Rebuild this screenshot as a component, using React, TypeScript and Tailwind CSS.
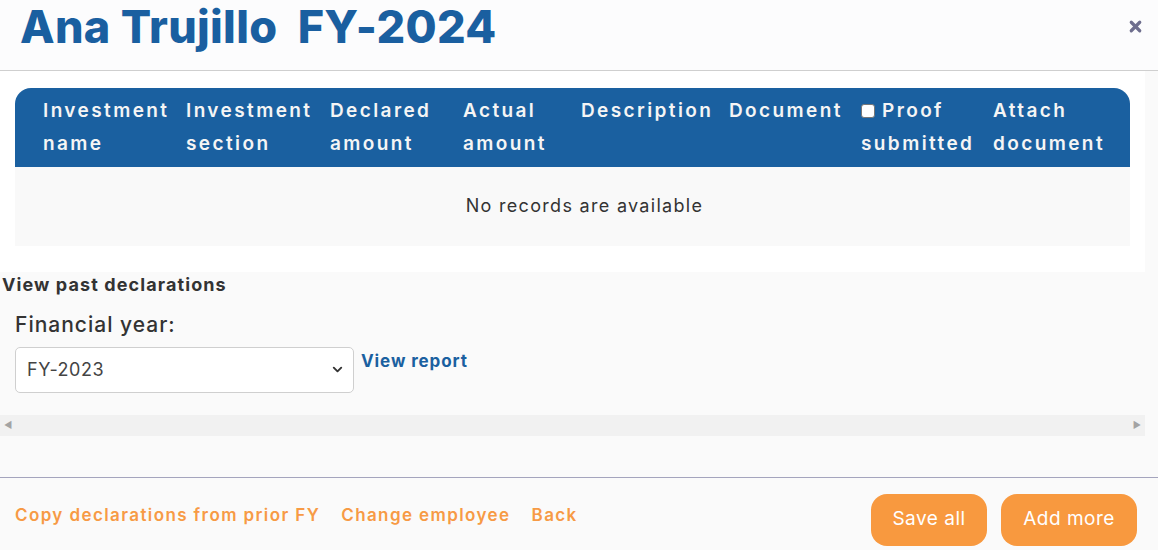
import { X, ChevronDown } from "lucide-react"

const columns = [
  { label: ["Investment", "name"], w: "w-[143px]" },
  { label: ["Investment", "section"], w: "w-[144px]" },
  { label: ["Declared", "amount"], w: "w-[133px]" },
  { label: ["Actual", "amount"], w: "w-[118px]" },
  { label: ["Description"], w: "w-[148px]" },
  { label: ["Document"], w: "w-[132px]" },
]

const App = () => {
  return (
    <div className="h-[550px] w-[1158px] overflow-hidden bg-[#fafafa] font-['Inter',sans-serif] text-[#333]">
      <div className="flex h-[71px] items-start justify-between border-b border-[#cfcfcf] bg-[#fcfcfd] pl-[20px] pr-[14px] pt-[4px]">
        <h1 className="text-[45px] font-extrabold leading-[46px] tracking-[0.3px] text-[#1a5fa0]">
          Ana Trujillo&nbsp; FY-2024
        </h1>
        <X className="mt-[14px] h-[17px] w-[17px] text-[#6e6e8e]" strokeWidth={4.5} />
      </div>

      <div className="w-[1145px] bg-white px-[15px] pb-[26px] pt-[17px]">
        <div className="flex h-[79px] rounded-t-[16px] bg-[#1a60a0] pl-[28px] pt-[6px] text-[19px] font-semibold leading-[33px] tracking-[2.4px] text-[#f5f5f5]">
          {columns.map((c) => (
            <div key={c.label[0]} className={c.w}>
              {c.label.map((l) => (
                <div key={l} className="whitespace-nowrap">{l}</div>
              ))}
            </div>
          ))}
          <div className="w-[132px]">
            <div className="flex items-center gap-[7px]">
              <span className="h-[14px] w-[14px] rounded-[3px] border border-[#777] bg-white" />
              Proof
            </div>
            <div>submitted</div>
          </div>
          <div>
            <div>Attach</div>
            <div>document</div>
          </div>
        </div>
        <div className="flex h-[79px] items-center justify-center bg-[#f9f9f9] pb-[3px] pl-[24px] text-[18px] tracking-[1.3px] text-[#333]">
          No records are available
        </div>
      </div>

      <div className="-mt-[1px]">
        <div className="pl-[2px] text-[18px] font-bold tracking-[1.1px] text-[#333]">View past declarations</div>
        <div className="pl-[15px] pt-[11px] text-[21px] font-medium tracking-[1px] text-[#333]">Financial year:</div>
        <div className="mt-[6px] flex items-start pl-[15px]">
          <div className="flex h-[46px] w-[339px] items-center justify-between rounded-[5px] border border-[#cfcfcf] bg-white pl-[11px] pr-[8px] text-[18px] tracking-[0.5px] text-[#444]">
            FY-2023
            <ChevronDown className="h-[15px] w-[15px] text-[#333]" strokeWidth={3} />
          </div>
          <a className="ml-[7px] mt-[2px] text-[17px] font-bold tracking-[0.9px] text-[#1a60a0]">View report</a>
        </div>
      </div>

      <div className="mt-[22px] flex h-[21px] w-[1145px] items-center justify-between bg-[#f1f1f1] px-[4px] text-[9px] text-[#a3a3a3]">
        <span>◀</span>
        <span>▶</span>
      </div>

      <div className="mt-[41px] border-t border-[#a4a4bd]" />

      <div className="flex items-center justify-between pl-[15px] pr-[21px] pt-[16px]">
        <div className="-mt-[8px] flex gap-[21px] text-[17px] font-semibold tracking-[1.4px] text-[#f79a45]">
          <a>Copy declarations from prior FY</a>
          <a>Change employee</a>
          <a>Back</a>
        </div>
        <div className="flex gap-[14px]">
          <button className="h-[52px] w-[116px] rounded-[16px] bg-[#f8993f] text-[19px] tracking-[0.5px] text-white">
            Save all
          </button>
          <button className="h-[52px] w-[136px] rounded-[16px] bg-[#f8993f] text-[19px] tracking-[0.5px] text-white">
            Add more
          </button>
        </div>
      </div>
    </div>
  )
}

export default App
